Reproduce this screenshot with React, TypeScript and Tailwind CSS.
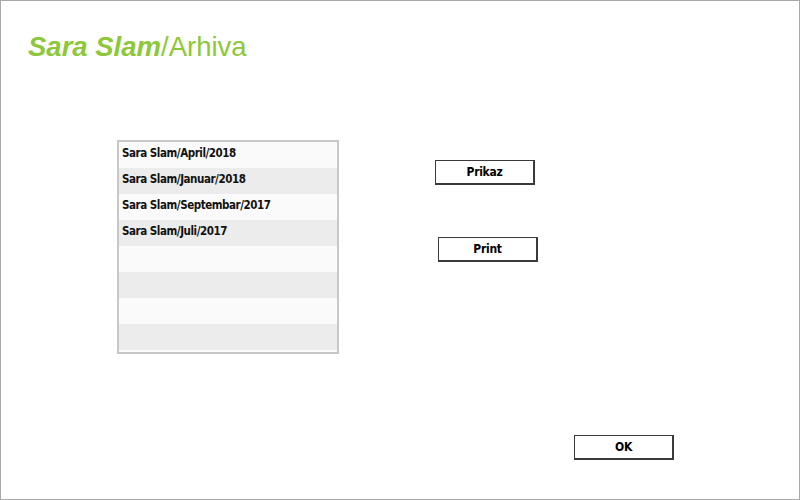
import React from 'react';

const items = [
  'Sara Slam/April/2018',
  'Sara Slam/Januar/2018',
  'Sara Slam/Septembar/2017',
  'Sara Slam/Juli/2017',
  '',
  '',
  '',
  '',
  '',
];

const SketchButton: React.FC<{ label: string; className?: string }> = ({ label, className }) => (
  <button
    type="button"
    className={`w-[100px] h-[25px] bg-white border border-[#3a3a3a] border-r-2 border-b-2 text-[12px] font-bold text-black tracking-[-0.3px] font-['DejaVu_Sans_Condensed',sans-serif] ${className ?? ''}`}
  >
    {label}
  </button>
);

export default function App() {
  return (
    <div className="w-[800px] h-[500px] bg-white border border-[#a8a8a8] flex flex-col font-['Liberation_Sans',Arial,sans-serif]">
      <h1 className="pl-[27px] pt-[30px] text-[27.5px] leading-[32px] text-[#8cc83a]">
        <span className="italic font-bold">Sara Slam</span>/Arhiva
      </h1>

      <div className="flex pl-[116px] pt-[77px]">
        <div className="w-[222px] h-[214px] border-2 border-[#c8c8c8] overflow-hidden bg-[#fafafa]">
          {items.map((item, i) => (
            <div
              key={i}
              className={`h-[26px] flex items-center pb-[3px] px-[3px] text-[11.5px] font-bold text-[#111] font-['DejaVu_Sans_Condensed',sans-serif] tracking-[-0.45px] ${
                i % 2 === 0 ? 'bg-[#fafafa]' : 'bg-[#ececec]'
              }`}
            >
              {item}
            </div>
          ))}
        </div>

        <div className="flex flex-col pl-[96px] pt-[20px]">
          <SketchButton label="Prikaz" />
          <SketchButton label="Print" className="mt-[52px] ml-[3px]" />
        </div>
      </div>

      <div className="flex pl-[573px] pt-[81px]">
        <SketchButton label="OK" />
      </div>
    </div>
  );
}
